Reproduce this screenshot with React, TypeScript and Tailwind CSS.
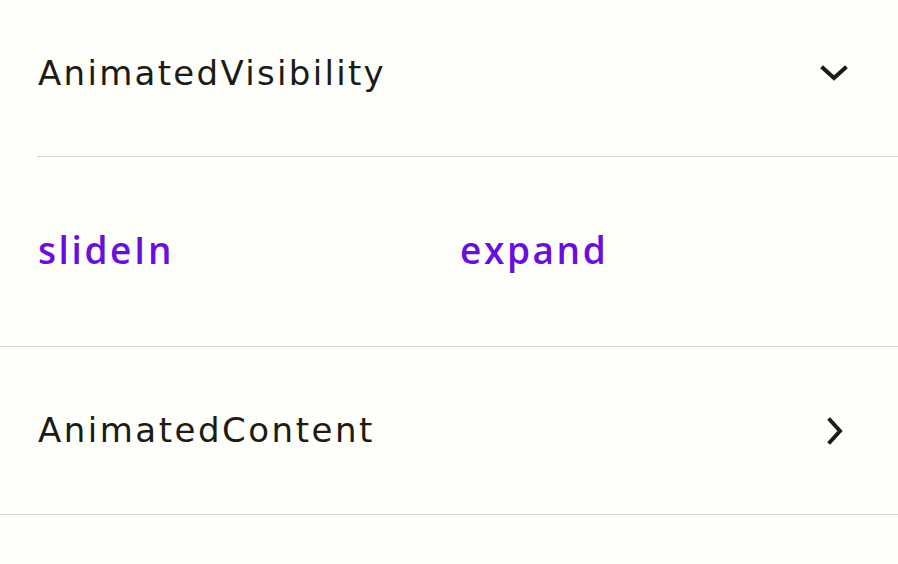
import React from 'react';

const ChevronDown = () => (
  <svg width="28" height="18" viewBox="0 0 28 18" fill="none">
    <path d="M3 4 L14 14 L25 4" stroke="#1c1b14" strokeWidth="4" strokeLinecap="square" />
  </svg>
);

const ChevronRight = () => (
  <svg width="18" height="28" viewBox="0 0 18 28" fill="none">
    <path d="M4 3 L14 14 L4 25" stroke="#1c1b14" strokeWidth="4" strokeLinecap="square" />
  </svg>
);

export default function App() {
  return (
    <div className="w-[898px] h-[564px] bg-[#fefefa] overflow-hidden flex flex-col" style={{ fontFamily: '"DejaVu Sans", "Open Sans", sans-serif' }}>
      {/* AnimatedVisibility header */}
      <div className="h-[156px] flex items-center justify-between pl-[38px] pr-[50px] pb-[10px]">
        <span className="text-[34px] text-[#1c1b14] tracking-[2.3px]">AnimatedVisibility</span>
        <ChevronDown />
      </div>
      <div className="ml-[37px] h-px bg-[#d8d8c6]" />

      {/* expanded content */}
      <div className="h-[189px] flex items-center pl-[38px] pb-[4px] font-['Open_Sans',sans-serif]">
        <span className="w-[422px] text-[37px] font-semibold text-[#6a0ee0] tracking-[2.6px]">slideIn</span>
        <span className="text-[37px] font-semibold text-[#6a0ee0] tracking-[2.6px]">expand</span>
      </div>
      <div className="h-px bg-[#d8d8c6]" />

      {/* AnimatedContent */}
      <div className="h-[167px] flex items-center justify-between pl-[38px] pr-[54px]">
        <span className="text-[34px] text-[#1c1b14] tracking-[2.5px]">AnimatedContent</span>
        <ChevronRight />
      </div>
      <div className="h-px bg-[#d8d8c6]" />
    </div>
  );
}
